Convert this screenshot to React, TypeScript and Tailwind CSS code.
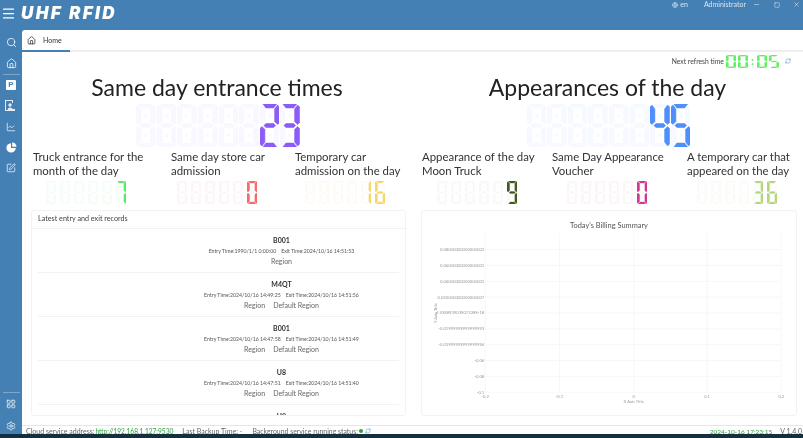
import type { ReactNode } from "react";
import { ChartLine, Globe, Home, LayoutGrid, Menu, Minus, RefreshCw, Search, Settings, Square, SquarePen, X } from "lucide-react";

const SEGS: Record<string, string> = {
  a: "3,0 17,0 14,4 6,4",
  b: "18,1 20,3 20,19 18,21 15,18 15,5",
  c: "18,23 20,25 20,41 18,43 15,39 15,26",
  d: "3,44 17,44 14,40 6,40",
  e: "2,23 0,25 0,41 2,43 5,39 5,26",
  f: "2,1 0,3 0,19 2,21 5,18 5,5",
  g: "4,22 6,20 14,20 16,22 14,24 6,24",
};

const DIGITS: Record<string, string> = {
  "0": "abcdef",
  "1": "bc",
  "2": "abged",
  "3": "abgcd",
  "4": "fgbc",
  "5": "afgcd",
  "6": "afgedc",
  "7": "abc",
  "8": "abcdefg",
  "9": "abcdfg",
};

function Digit({ char, color, ghost, height, width }: { char?: string; color: string; ghost: string; height: number; width?: number }) {
  const lit = char ? DIGITS[char] : "";
  return (
    <svg viewBox="0 0 20 44" preserveAspectRatio="none" style={{ height, width: width ?? (height * 20) / 44 }} className="block shrink-0">
      {Object.keys(SEGS).map((k) => (
        <polygon
          key={k}
          points={SEGS[k]}
          fill={lit.includes(k) ? color : ghost}
          stroke={lit.includes(k) ? color : ghost}
          strokeWidth="0.6"
        />
      ))}
      <rect x="8.500" y="10.500" width="3" height="3" fill={ghost} />
      <rect x="8.500" y="30.500" width="3" height="3" fill={ghost} />
    </svg>
  );
}

function Counter({ value, slots, color, ghost, height, width, gap }: { value: string; slots: number; color: string; ghost: string; height: number; width?: number; gap: string }) {
  const chars = value.padStart(slots, " ").split("");
  return (
    <div className={`flex ${gap}`}>
      {chars.map((c, i) => (
        <Digit key={i} char={c === " " ? undefined : c} color={color} ghost={ghost} height={height} width={width} />
      ))}
    </div>
  );
}

const records = [
  { code: "B001", entry: "1990/1/1 0:00:00", exit: "2024/10/16 14:51:53", region: "" },
  { code: "M4QT", entry: "2024/10/16 14:49:25", exit: "2024/10/16 14:51:56", region: "Default Region" },
  { code: "B001", entry: "2024/10/16 14:47:58", exit: "2024/10/16 14:51:49", region: "Default Region" },
  { code: "U8", entry: "2024/10/16 14:47:51", exit: "2024/10/16 14:51:40", region: "Default Region" },
  { code: "U8", entry: "2024/10/16 14:47:51", exit: "2024/10/16 14:51:40", region: "Default Region" },
];

const yLabels = [
  "0.08000000000000002",
  "0.06000000000000001",
  "0.04000000000000001",
  "0.020000000000000007",
  "6.938893903907228E-18",
  "-0.01999999999999993",
  "-0.03999999999999994",
  "-0.06",
  "-0.08",
  "-0.1",
];

function BillingChart() {
  const xs = [63, 138, 213, 287, 362];
  const xl = ["-0.2", "-0.1", "0", "0.1", "0.2"];
  return (
    <svg viewBox="0 0 376 206" className="block h-full w-full">
      <text x="188" y="17" textAnchor="middle" fontSize="7.5" fill="#555">
        Today's Billing Summary
      </text>
      {xs.map((x) => (
        <line key={x} x1={x} x2={x} y1="23" y2="183" stroke="#f3f3f3" strokeWidth="0.7" />
      ))}
      {yLabels.map((t, i) => {
        const y = 39 + i * 16;
        return (
          <g key={t}>
            <line x1="63" x2="362" y1={y} y2={y} stroke="#f3f3f3" strokeWidth="0.7" />
            <text x="62" y={y + 1.5} textAnchor="end" fontSize="4.200" fill="#999">
              {t}
            </text>
          </g>
        );
      })}
      {xs.map((x, i) => (
        <text key={x} x={x} y="189" textAnchor="middle" fontSize="4.200" fill="#999">
          {xl[i]}
        </text>
      ))}
      <text x="213" y="194" textAnchor="middle" fontSize="4.200" fill="#999">
        X Axis Title
      </text>
      <text x="14" y="103" textAnchor="middle" fontSize="4.200" fill="#999" transform="rotate(-90 14 103)">
        Y Axis Title
      </text>
    </svg>
  );
}

function StatLabel({ children }: { children: ReactNode }) {
  return <div className="pr-[4px] text-[11.400px] leading-[13.500px] text-[#333]">{children}</div>;
}

export default function App() {
  return (
    <div className="flex h-[438px] w-[803px] flex-col overflow-hidden bg-[#4480b4] font-['Lato',sans-serif] blur-[0.3px]">
      <header className="flex h-[30px] shrink-0 items-start text-white">
        <Menu size={15} strokeWidth={2} className="ml-[1px] mt-[6px]" />
        <div className="ml-[5px] mt-[2px] font-['Inter',sans-serif] text-[17px] font-black italic leading-[22px] tracking-[2.400px]">UHF RFID</div>
        <div className="ml-auto flex items-center pt-[1px] text-[7px] leading-[5px] text-white/80">
          <Globe size={6} />
          <span className="ml-[2px]">en</span>
          <span className="ml-[16px]">Administrator</span>
          <Minus size={7} className="ml-[7px]" />
          <Square size={6} className="ml-[14px]" />
          <X size={7} className="ml-[13px] mr-[3px]" />
        </div>
      </header>
      <div className="flex min-h-0 flex-1">
        <aside className="flex w-[22px] shrink-0 flex-col items-center text-white/85">
          <Search size={11} className="mt-[7px]" />
          <Home size={11} className="mt-[10px]" />
          <div className="mt-[5px] h-px w-[17px] bg-white/30" />
          <div className="mt-[5px] flex h-[10px] w-[10px] items-center justify-center rounded-[1px] bg-white font-['Liberation_Sans',sans-serif] text-[8px] font-bold text-[#4480b4]">P</div>
          <svg viewBox="0 0 12 11" className="mt-[10px] h-[11px] w-[12px]" fill="currentColor">
            <path d="M0 0h8v3H7V1H1v9h2v1H0z" />
            <circle cx="5" cy="5" r="1.7" />
            <path d="M2.500 11c0-2.500 1-3.500 2.500-3.500S7.500 8.500 7.500 9H10v2z" />
          </svg>
          <ChartLine size={10} className="mt-[11px]" />
          <svg viewBox="0 0 11 11" className="mt-[10px] h-[11px] w-[11px]" fill="white">
            <path d="M5 1.200A4.700 4.700 0 1 0 9.800 6H5z" />
            <path d="M6.200 0.500V4.800h4.300A4.500 4.500 0 0 0 6.200 0.500z" />
          </svg>
          <SquarePen size={10} className="mt-[10px]" />
          <div className="mt-auto h-px w-[17px] bg-white/30" />
          <LayoutGrid size={10} className="mt-[6px]" />
          <Settings size={10} className="mb-[3px] mt-[12px]" />
        </aside>
        <main className="flex min-w-0 flex-1 flex-col overflow-hidden rounded-tl-[3px] bg-white">
          <div className="flex h-[22px] shrink-0 border-b-2 border-[#eeeeee]">
            <div className="-mb-[2px] flex w-[48px] items-center border-b-2 border-[#4480b4] pl-[5px] text-[7px] text-[#333]">
              <Home size={9} />
              <span className="ml-[7px]">Home</span>
            </div>
          </div>
          <div className="flex h-[18px] shrink-0 items-center justify-end pr-[12px]">
            <span className="text-[6.800px] text-[#444]">Next refresh time</span>
            <div className="ml-[2px] flex items-center">
              <Counter value="00" slots={2} color="#66ee66" ghost="#fff" height={13} width={10} gap="gap-[2px]" />
              <span className="mx-[3px] text-[12px] font-bold leading-none text-[#66ee66]">:</span>
              <Counter value="05" slots={2} color="#66ee66" ghost="#fff" height={13} width={10} gap="gap-[2px]" />
            </div>
            <RefreshCw size={6} className="ml-[6px] text-[#5a8fd0]" />
          </div>
          <div className="grid min-h-0 flex-1 grid-cols-[390px_391px]">
            <section className="flex min-h-0 flex-col">
              <h2 className="mt-[2px] text-center text-[23px] leading-[30px] text-[#222]">Same day entrance times</h2>
              <div className="mt-[2px] flex justify-center pl-[2px]">
                <Counter value="23" slots={8} color="#8b5cf6" ghost="#f9f7ff" height={43} gap="gap-px" />
              </div>
              <div className="mt-[3px] grid grid-cols-[138px_124px_1fr] pl-[11px]">
                <StatLabel>Truck entrance for the month of the day</StatLabel>
                <StatLabel>Same day store car admission</StatLabel>
                <StatLabel>Temporary car admission on the day</StatLabel>
                <div className="mt-[4px] pl-[13px]">
                  <Counter value="7" slots={6} color="#55ee66" ghost="#f6fdf7" height={23} gap="gap-[3.500px]" />
                </div>
                <div className="mt-[4px] pl-[6px]">
                  <Counter value="0" slots={6} color="#f56c6c" ghost="#fef6f6" height={23} gap="gap-[3.500px]" />
                </div>
                <div className="mt-[4px] pl-[10px]">
                  <Counter value="16" slots={6} color="#f5d76e" ghost="#fefbf5" height={23} gap="gap-[3.500px]" />
                </div>
              </div>
              <div className="mb-[9px] ml-[9px] mt-[6px] min-h-0 w-[375px] flex-1 overflow-hidden rounded-[3px] border border-[#f2f2f2]">
                <div className="border-b border-[#f2f2f2] px-[6px] pb-[4px] pt-[3px] text-[7.200px] leading-[10px] text-[#444]">Latest entry and exit records</div>
                <div className="px-[6px]">
                  {records.map((r, i) => (
                    <div key={i} className="border-b border-[#f2f2f2] pb-[5px] pl-[126px] pt-[5px] text-center">
                      <div className="text-[7px] font-bold leading-[12px] text-[#333]">{r.code}</div>
                      <div className="text-[5.200px] leading-[10px] text-[#555]">
                        Entry Time:{r.entry}
                        <span className="ml-[5px]">Exit Time:{r.exit}</span>
                      </div>
                      <div className="text-[7px] leading-[11px] text-[#666]">
                        Region
                        {r.region && <span className="ml-[8px]">{r.region}</span>}
                      </div>
                    </div>
                  ))}
                </div>
              </div>
            </section>
            <section className="flex min-h-0 flex-col">
              <h2 className="mt-[2px] text-center text-[23px] leading-[30px] text-[#222]">Appearances of the day</h2>
              <div className="mt-[2px] flex justify-center pl-[2px]">
                <Counter value="45" slots={8} color="#4f8ffb" ghost="#f6f9ff" height={43} gap="gap-px" />
              </div>
              <div className="mt-[3px] grid grid-cols-[130px_135px_1fr] pl-[10px]">
                <StatLabel>Appearance of the day Moon Truck</StatLabel>
                <StatLabel>Same Day Appearance Voucher</StatLabel>
                <StatLabel>A temporary car that appeared on the day</StatLabel>
                <div className="mt-[4px] pl-[15px]">
                  <Counter value="9" slots={6} color="#3f5a1e" ghost="#f9faf7" height={23} gap="gap-[3.500px]" />
                </div>
                <div className="mt-[4px] pl-[15px]">
                  <Counter value="0" slots={6} color="#d1398f" ghost="#fdf6f9" height={23} gap="gap-[3.500px]" />
                </div>
                <div className="mt-[4px] pl-[10px]">
                  <Counter value="36" slots={6} color="#b5d67f" ghost="#fbfcf7" height={23} gap="gap-[3.500px]" />
                </div>
              </div>
              <div className="mb-[9px] ml-[9px] mt-[6px] min-h-0 w-[376px] flex-1 overflow-hidden rounded-[3px] border border-[#f2f2f2]">
                <BillingChart />
              </div>
            </section>
          </div>
          <footer className="flex h-[9px] shrink-0 items-start overflow-hidden border-t border-[#e6e6e6] pl-[4px] pr-[1px] text-[7px] leading-[11px] text-[#666]">
            <span>Cloud service address:</span>
            <span className="ml-[1px] text-[6.600px] text-[#2e9e3f]">http://192.168.1.127:9530</span>
            <span className="ml-[9px]">Last Backup Time: -</span>
            <span className="ml-[10px] text-[6.900px]">Background service running status:</span>
            <span className="ml-[1px] mt-[3px] h-[4px] w-[4px] rounded-full bg-[#2e9e3f]" />
            <RefreshCw size={6} className="ml-[2px] mt-[2px] text-[#5a8fd0]" />
            <span className="ml-auto text-[6.500px] text-[#2e9e3f]">2024-10-16 17:23:15</span>
            <span className="ml-[8px]">V 1.4.0</span>
          </footer>
        </main>
      </div>
      <div className="h-[4px] shrink-0 bg-[#14303f]" />
    </div>
  );
}
